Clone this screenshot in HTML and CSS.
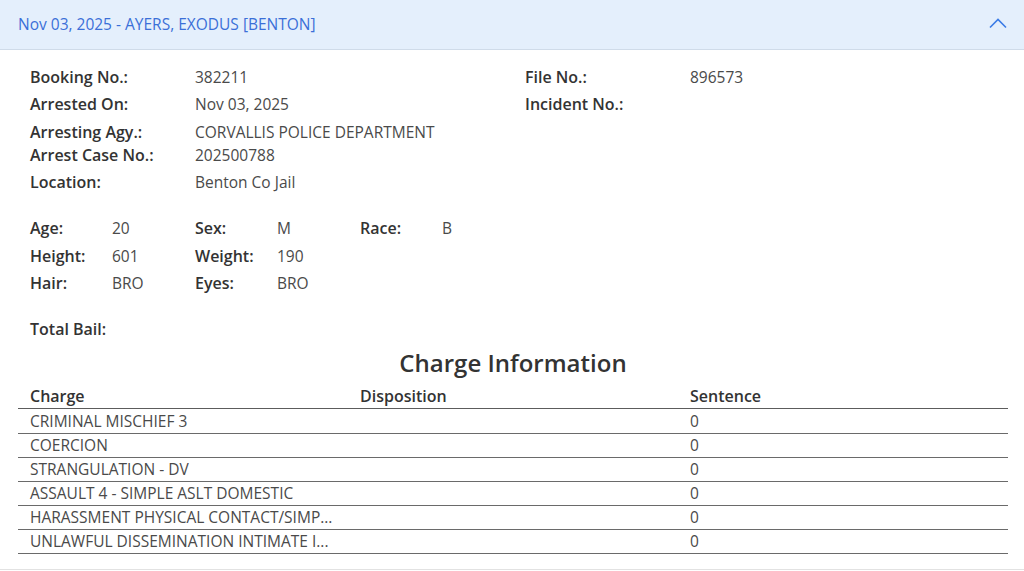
FILE: index.html
```html
<!DOCTYPE html>
<html lang="en">
<head>
<meta charset="utf-8">
<title>Booking</title>
<link rel="stylesheet" href="styles.css">
</head>
<body>
<div class="card">
  <div class="card-header">
    <span class="card-title">Nov 03, 2025 - AYERS, EXODUS [BENTON]</span>
    <svg class="chevron" width="18" height="12" viewBox="0 0 18 12" aria-hidden="true"><polyline points="1,10.5 9,2.5 17,10.5" fill="none" stroke="#3a7be6" stroke-width="1.6"/></svg>
  </div>
  <div class="card-body">
    <div class="info-grid">
      <div class="info-col">
        <div class="info-row"><span class="lbl">Booking No.:</span><span class="val">382211</span></div>
        <div class="info-row r2"><span class="lbl">Arrested On:</span><span class="val">Nov 03, 2025</span></div>
        <div class="info-row tight"><span class="lbl">Arresting Agy.:</span><span class="val">CORVALLIS POLICE DEPARTMENT</span></div>
        <div class="info-row"><span class="lbl">Arrest Case No.:</span><span class="val">202500788</span></div>
        <div class="info-row"><span class="lbl">Location:</span><span class="val">Benton Co Jail</span></div>
      </div>
      <div class="info-col">
        <div class="info-row"><span class="lbl">File No.:</span><span class="val">896573</span></div>
        <div class="info-row r2"><span class="lbl">Incident No.:</span><span class="val"></span></div>
      </div>
    </div>

    <div class="phys-grid">
      <div class="phys"><span class="plbl">Age:</span><span class="val">20</span></div>
      <div class="phys"><span class="plbl">Sex:</span><span class="val">M</span></div>
      <div class="phys"><span class="plbl">Race:</span><span class="val">B</span></div>
      <div class="phys"><span class="plbl">Height:</span><span class="val">601</span></div>
      <div class="phys"><span class="plbl">Weight:</span><span class="val">190</span></div>
      <div class="phys"></div>
      <div class="phys"><span class="plbl">Hair:</span><span class="val">BRO</span></div>
      <div class="phys"><span class="plbl">Eyes:</span><span class="val">BRO</span></div>
      <div class="phys"></div>
    </div>

    <div class="bail"><span class="lbl">Total Bail:</span></div>

    <h2 class="section-title">Charge Information</h2>

    <table class="charges">
      <thead>
        <tr><th>Charge</th><th>Disposition</th><th>Sentence</th></tr>
      </thead>
      <tbody>
        <tr class="first"><td>CRIMINAL MISCHIEF 3</td><td></td><td>0</td></tr>
        <tr><td>COERCION</td><td></td><td>0</td></tr>
        <tr><td>STRANGULATION - DV</td><td></td><td>0</td></tr>
        <tr><td>ASSAULT 4 - SIMPLE ASLT DOMESTIC</td><td></td><td>0</td></tr>
        <tr><td>HARASSMENT PHYSICAL CONTACT/SIMP...</td><td></td><td>0</td></tr>
        <tr><td>UNLAWFUL DISSEMINATION INTIMATE I...</td><td></td><td>0</td></tr>
      </tbody>
    </table>
  </div>
</div>
</body>
</html>
```

FILE: styles.css
```css
* { box-sizing: border-box; }

html, body {
  margin: 0;
  padding: 0;
  background: #ffffff;
}

body {
  font-family: "Open Sans", "Noto Sans", sans-serif;
  font-size: 15.5px;
  color: #4a4a4a;
  width: 1024px;
}

.card {
  border-bottom: 1px solid #e2e2e2;
  padding-bottom: 15px;
}

.card-header {
  height: 50px;
  background: #e4effc;
  border-bottom: 1px solid #cfdbe9;
  display: flex;
  align-items: center;
  justify-content: space-between;
  padding: 0 17px 0 18px;
}

.card-title {
  color: #3b6fd8;
  font-size: 15.5px;
  line-height: 20px;
  margin-top: -2px;
}

.chevron {
  display: block;
  margin-top: -4px;
}

.card-body {
  padding: 16px 16px 0 18px;
}

.info-grid {
  display: grid;
  grid-template-columns: 1fr 1fr;
}

.info-col {
  padding: 0 12px;
}

.info-row {
  display: flex;
  line-height: 23px;
  height: 23px;
  margin-bottom: 4px;
}

.info-row.r2 { margin-bottom: 5px; }
.info-row.tight { margin-bottom: 0; }
.info-row:last-child { margin-bottom: 0; }

.lbl {
  width: 165px;
  flex: none;
  font-size: 16px;
  font-weight: 600;
  color: #333333;
}

.val {
  color: #4a4a4a;
}

.phys-grid {
  display: grid;
  grid-template-columns: 165px 165px 165px;
  row-gap: 4px;
  margin-top: 23px;
  padding: 0 12px;
}

.phys {
  display: flex;
  line-height: 23px;
  height: 23px;
}

.phys:nth-child(-n+3) { margin-bottom: 1px; }

.plbl {
  width: 82px;
  flex: none;
  font-size: 16px;
  font-weight: 600;
  color: #333333;
}

.bail {
  margin-top: 23px;
  padding: 0 12px;
  line-height: 23px;
}

.section-title {
  margin: 6px 0 0;
  text-align: center;
  font-size: 24px;
  line-height: 31px;
  font-weight: 600;
  color: #333333;
}

.charges {
  width: 990px;
  margin-top: 6px;
  border-collapse: collapse;
  table-layout: fixed;
}

.charges th,
.charges td {
  padding: 0 12px;
  text-align: left;
  white-space: nowrap;
  overflow: hidden;
  height: 24px;
  line-height: 23px;
}

.charges th {
  font-size: 16px;
  font-weight: 600;
  color: #333333;
  border-bottom: 1px solid #5c5c5c;
  padding-top: 1px;
}

.charges td {
  color: #4a4a4a;
  border-bottom: 1px solid #6a6a6a;
}

.charges tr.first td {
  height: 25px;
}
```
